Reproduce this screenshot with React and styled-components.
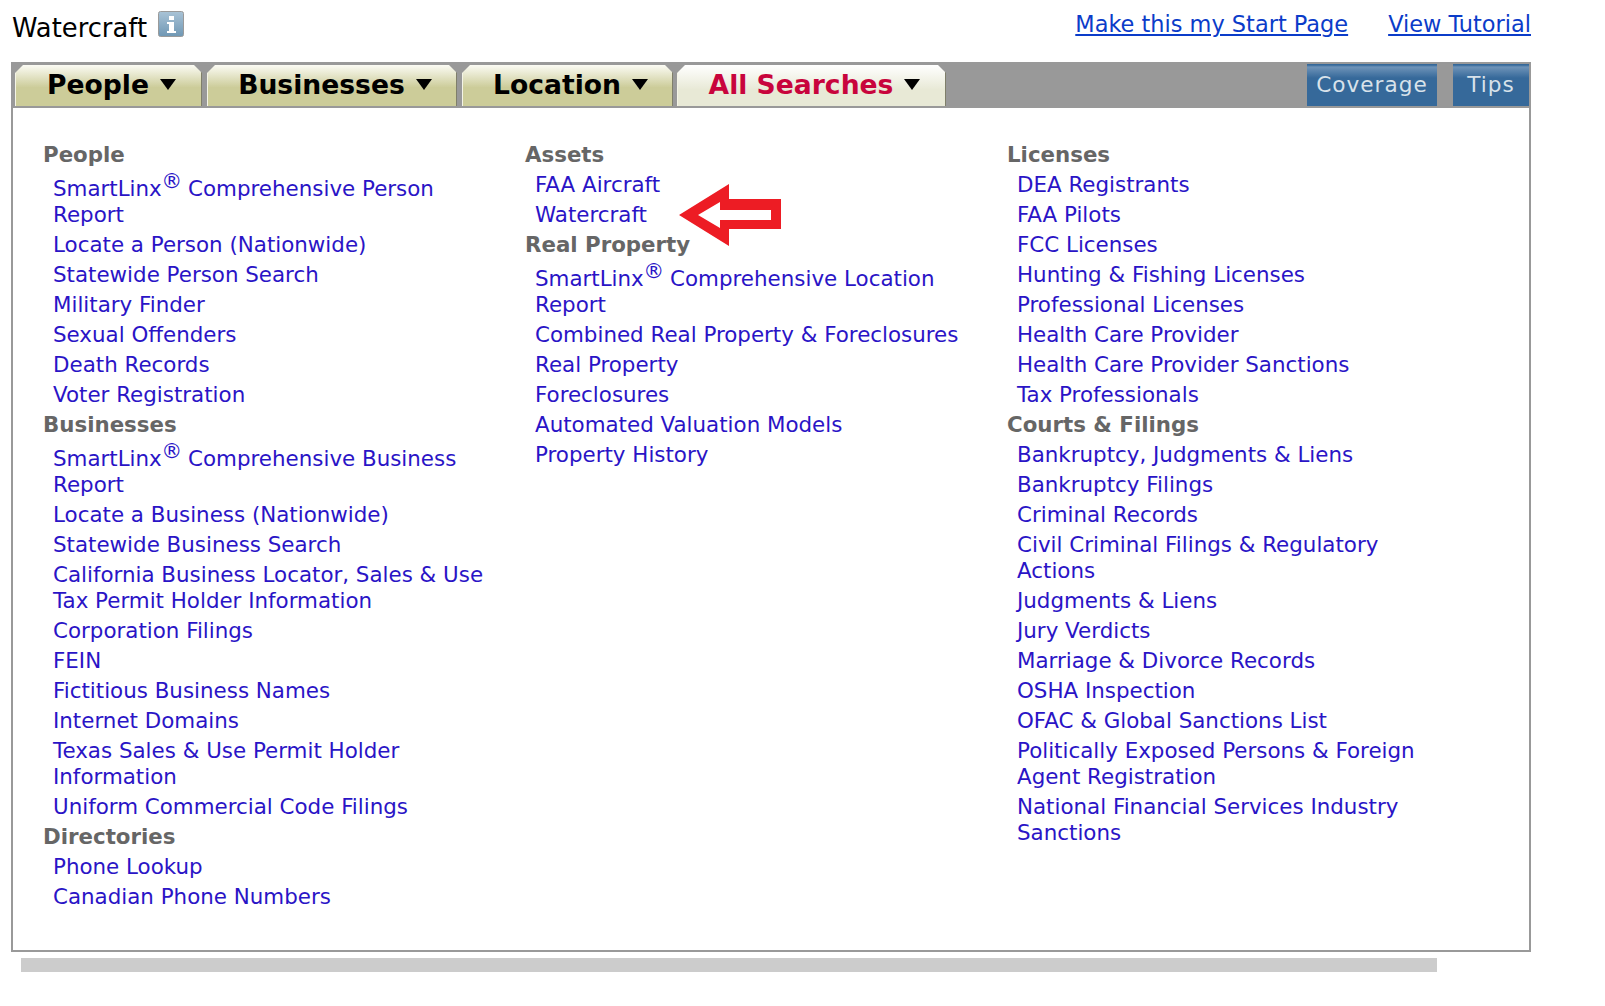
import styled, { createGlobalStyle } from "styled-components";

const Global = createGlobalStyle`
  html, body {
    margin: 0;
    padding: 0;
    background: #fff;
    font-family: "DejaVu Sans", Verdana, sans-serif;
  }
`;

const Page = styled.div`
  width: 1605px;
  height: 1006px;
  padding: 0 0 0 11px;
  box-sizing: border-box;
  overflow: hidden;
`;

const Header = styled.div`
  width: 1520px;
  height: 62px;
  display: flex;
  align-items: flex-start;
  justify-content: space-between;
`;

const Title = styled.div`
  display: flex;
  align-items: flex-start;
  font-size: 25.8px;
  color: #000;
  line-height: 32px;
  padding: 12px 0 0 1px;
`;

const InfoIcon = styled.svg`
  width: 26px;
  height: 26px;
  margin: 0 0 0 11px;
  position: relative;
  top: -1px;
`;

const HeaderLinks = styled.div`
  display: flex;
  gap: 40px;
  padding-top: 9px;
`;

const HeaderLink = styled.a`
  font-size: 22.45px;
  line-height: 30px;
  color: #0b3cc9;
  text-decoration: underline;
`;

const TabBar = styled.div`
  height: 46px;
  box-sizing: border-box;
  background: #999;
  display: flex;
  align-items: flex-end;
  padding: 2px 2px 2px 4px;
  width: 1520px;
`;

const Tab = styled.div`
  width: ${(p) => p.$w}px;
  height: 41px;
  margin-right: ${(p) => p.$gap}px;
  box-sizing: border-box;
  display: flex;
  align-items: center;
  justify-content: center;
  gap: 11px;
  padding: 0 0 3px 6px;
  font-size: 26.6px;
  font-weight: bold;
  color: ${(p) => (p.$active ? "#c8043c" : "#000")};
  background: ${(p) =>
    p.$active
      ? "linear-gradient(to bottom, #fff 0, #e8e9d6 60%, #e8e9d6 100%)"
      : "linear-gradient(to bottom, #fbfbf4 0, #cccc99 55%, #cccc99 100%)"};
  border-left: 1px solid #f4f4e6;
  border-right: 1px solid #7f7f6a;
  clip-path: polygon(8px 0, calc(100% - 8px) 0, 100% 8px, 100% 100%, 0 100%, 0 8px);
`;

const Caret = styled.span`
  width: 0;
  height: 0;
  border-left: 8.5px solid transparent;
  border-right: 8.5px solid transparent;
  border-top: 11px solid #000;
`;

const Spacer = styled.div`
  flex: 1;
`;

const BlueButton = styled.div`
  width: ${(p) => p.$w}px;
  height: 42px;
  margin-left: ${(p) => p.$gap}px;
  padding-bottom: 2px;
  box-sizing: border-box;
  display: flex;
  align-items: center;
  justify-content: center;
  font-size: 21.6px;
  letter-spacing: 1px;
  color: #d8e2ea;
  background: linear-gradient(to bottom, #36699a 0, #36699a 1px, #6e93b8 3px, #36699a 14px);
`;

const Panel = styled.div`
  width: 1520px;
  height: 844px;
  box-sizing: border-box;
  border: 2px solid #999;
  border-top: 0;
  padding: 34px 0 0 30px;
  display: flex;
`;

const Column = styled.div`
  width: 482px;
`;

const Heading = styled.div`
  font-size: 21.33px;
  font-weight: bold;
  line-height: 26px;
  padding-bottom: 4px;
  color: #666;
`;

const LinkItem = styled.a`
  display: block;
  position: relative;
  width: 440px;
  margin-left: 10px;
  padding-bottom: 4px;
  font-size: 21.4px;
  line-height: 26px;
  color: #2a14c6;
  text-decoration: none;
`;

const Mark = styled.sup`
  font-size: 21px;
  line-height: 0;
  position: relative;
  vertical-align: baseline;
  top: -8px;
  margin: 0 -1px 0 -0.5px;
`;

const SmartLine = styled.span`
  display: block;
  padding-top: 4px;
`;

const Arrow = styled.svg`
  position: absolute;
  left: 144px;
  top: -19px;
  width: 104px;
  height: 64px;
`;

const ScrollTrack = styled.div`
  width: 1416px;
  height: 14px;
  margin: 6px 0 0 10px;
  background: #ccc;
`;

const Smart = ({ rest }) => (
  <LinkItem href="#">
    <SmartLine>
      SmartLinx<Mark>®</Mark> {rest}
    </SmartLine>
  </LinkItem>
);

const L = ({ children }) => <LinkItem href="#">{children}</LinkItem>;

export default function App() {
  return (
    <Page>
      <Global />
      <Header>
        <Title>
          Watercraft
          <InfoIcon viewBox="0 0 26 26">
            <defs>
              <linearGradient id="info" x1="0" y1="0" x2="0" y2="1">
                <stop offset="0" stopColor="#a9c3d6" />
                <stop offset="1" stopColor="#6f97b4" />
              </linearGradient>
            </defs>
            <rect x="0.5" y="0.5" width="25" height="25" rx="2" fill="url(#info)" stroke="#9a9a9a" />
            <rect x="11" y="5" width="5" height="4" fill="#fff" />
            <path d="M9 11h7v9h2v2H9v-2h2v-7H9z" fill="#fff" />
          </InfoIcon>
        </Title>
        <HeaderLinks>
          <HeaderLink href="#">Make this my Start Page</HeaderLink>
          <HeaderLink href="#">View Tutorial</HeaderLink>
        </HeaderLinks>
      </Header>
      <TabBar>
        <Tab $w={187} $gap={5}>People <Caret /></Tab>
        <Tab $w={250} $gap={5}>Businesses <Caret /></Tab>
        <Tab $w={211} $gap={4}>Location <Caret /></Tab>
        <Tab $w={269} $gap={0} $active>All Searches <Caret /></Tab>
        <Spacer />
        <BlueButton $w={130} $gap={0}>Coverage</BlueButton>
        <BlueButton $w={76} $gap={16}>Tips</BlueButton>
      </TabBar>
      <Panel>
        <Column>
          <Heading>People</Heading>
          <Smart rest="Comprehensive Person Report" />
          <L>Locate a Person (Nationwide)</L>
          <L>Statewide Person Search</L>
          <L>Military Finder</L>
          <L>Sexual Offenders</L>
          <L>Death Records</L>
          <L>Voter Registration</L>
          <Heading>Businesses</Heading>
          <Smart rest="Comprehensive Business Report" />
          <L>Locate a Business (Nationwide)</L>
          <L>Statewide Business Search</L>
          <L>California Business Locator, Sales &amp; Use Tax Permit Holder Information</L>
          <L>Corporation Filings</L>
          <L>FEIN</L>
          <L>Fictitious Business Names</L>
          <L>Internet Domains</L>
          <L>Texas Sales &amp; Use Permit Holder Information</L>
          <L>Uniform Commercial Code Filings</L>
          <Heading>Directories</Heading>
          <L>Phone Lookup</L>
          <L>Canadian Phone Numbers</L>
        </Column>
        <Column>
          <Heading>Assets</Heading>
          <L>FAA Aircraft</L>
          <L>
            Watercraft
            <Arrow viewBox="0 0 104 64">
              <path
                fillRule="evenodd"
                fill="#ed1c24"
                d="M0 32 50 1V16H102V46H50V63ZM19 32 41 45V37H92V27H41V19Z"
              />
            </Arrow>
          </L>
          <Heading>Real Property</Heading>
          <Smart rest="Comprehensive Location Report" />
          <L>Combined Real Property &amp; Foreclosures</L>
          <L>Real Property</L>
          <L>Foreclosures</L>
          <L>Automated Valuation Models</L>
          <L>Property History</L>
        </Column>
        <Column>
          <Heading>Licenses</Heading>
          <L>DEA Registrants</L>
          <L>FAA Pilots</L>
          <L>FCC Licenses</L>
          <L>Hunting &amp; Fishing Licenses</L>
          <L>Professional Licenses</L>
          <L>Health Care Provider</L>
          <L>Health Care Provider Sanctions</L>
          <L>Tax Professionals</L>
          <Heading>Courts &amp; Filings</Heading>
          <L>Bankruptcy, Judgments &amp; Liens</L>
          <L>Bankruptcy Filings</L>
          <L>Criminal Records</L>
          <L>Civil Criminal Filings &amp; Regulatory Actions</L>
          <L>Judgments &amp; Liens</L>
          <L>Jury Verdicts</L>
          <L>Marriage &amp; Divorce Records</L>
          <L>OSHA Inspection</L>
          <L>OFAC &amp; Global Sanctions List</L>
          <L>Politically Exposed Persons &amp; Foreign Agent Registration</L>
          <L>National Financial Services Industry Sanctions</L>
        </Column>
      </Panel>
      <ScrollTrack />
    </Page>
  );
}
